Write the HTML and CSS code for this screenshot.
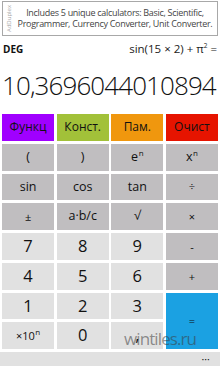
FILE: index.html
```html
<!DOCTYPE html>
<html>
<head>
<meta charset="utf-8">
<link rel="stylesheet" href="styles.css">
</head>
<body>
<div class="screen">
  <div class="ad">
    <span class="ad-brand">AdDuplex</span>
    <div class="ad-text">
      <span class="ad-line">Includes 5 unique calculators: Basic, Scientific,</span>
      <span class="ad-line">Programmer, Currency Converter, Unit Converter.</span>
    </div>
  </div>
  <div class="status">
    <span class="mode">DEG</span>
    <span class="expr">sin(15 × 2) + π<sup class="sq">2</sup> =</span>
  </div>
  <div class="result">10,3696044010894</div>
  <div class="pad">
    <button class="key top purple">Функц</button>
    <button class="key top green">Конст.</button>
    <button class="key top orange">Пам.</button>
    <button class="key top red">Очист</button>

    <button class="key dark">(</button>
    <button class="key dark">)</button>
    <button class="key dark"><span>e<sup class="pw">n</sup></span></button>
    <button class="key dark"><span>x<sup class="pw">n</sup></span></button>

    <button class="key dark">sin</button>
    <button class="key dark">cos</button>
    <button class="key dark">tan</button>
    <button class="key dark op">÷</button>

    <button class="key dark op">±</button>
    <button class="key dark">a·b/c</button>
    <button class="key dark">√</button>
    <button class="key dark op">×</button>

    <button class="key light num">7</button>
    <button class="key light num">8</button>
    <button class="key light num">9</button>
    <button class="key dark op">-</button>

    <button class="key light num">4</button>
    <button class="key light num">5</button>
    <button class="key light num">6</button>
    <button class="key dark op">+</button>

    <button class="key light num">1</button>
    <button class="key light num">2</button>
    <button class="key light num">3</button>
    <button class="key blue eq">=</button>

    <button class="key light exp"><span>×10<sup class="pw">n</sup></span></button>
    <button class="key light num">0</button>
    <button class="key light num">,</button>
  </div>
  <div class="appbar"><span class="dots">•••</span></div>
  <div class="watermark">wintiles.ru</div>
</div>
</body>
</html>
```

FILE: styles.css
```css
* { box-sizing: border-box; }
html, body { margin: 0; padding: 0; background: #fff; }
.screen {
  position: relative;
  width: 220px;
  height: 366px;
  overflow: hidden;
  font-family: "Open Sans", "Noto Sans", sans-serif;
  color: #111;
  display: flex;
  flex-direction: column;
}
.ad {
  position: relative;
  margin: 1px 2px 0 2px;
  height: 35px;
  border: 1px solid #a8a8a8;
  display: flex;
  align-items: center;
  justify-content: center;
}
.ad-brand {
  position: absolute;
  left: -9px;
  top: 13px;
  width: 30px;
  font-size: 6px;
  line-height: 7px;
  color: #aaa;
  transform: rotate(-90deg);
  text-align: center;
}
.ad-text {
  margin: 0 0 0 10px;
  display: flex;
  flex-direction: column;
  align-items: center;
  gap: 1px;
  font-size: 9px;
  color: #444;
  letter-spacing: -0.3px;
  white-space: nowrap;
}
.ad-line { display: block; line-height: 10px; height: 10px; }
.status {
  margin-top: 6px;
  height: 14px;
  padding: 0 3px;
  display: flex;
  justify-content: space-between;
  align-items: center;
  line-height: 14px;
}
.mode { font-size: 10px; font-weight: 700; color: #111; }
.expr { font-size: 11.5px; color: #222; }
.sq { font-size: 6.5px; vertical-align: 5px; line-height: 0; }
.result {
  margin-top: 11px;
  padding: 0 2px;
  height: 36px;
  line-height: 36px;
  font-size: 26px;
  font-weight: 300;
  color: #111;
  letter-spacing: -0.9px;
  white-space: nowrap;
}
.pad {
  margin-top: 11px;
  padding: 0 2px;
  height: 235px;
  display: grid;
  grid-template-columns: repeat(4, 1fr);
  grid-template-rows: repeat(8, 1fr);
  gap: 3px 2.5px;
}
.key {
  border: 0;
  margin: 0;
  padding: 0;
  font-family: inherit;
  color: #111;
  font-size: 12.5px;
  display: flex;
  align-items: center;
  justify-content: center;
  line-height: 1;
}
.top { font-size: 12px; color: #111; }
.purple { background: #a000ff; }
.green { background: #a2c139; }
.orange { background: #f0970e; }
.red { background: #e61400; }
.dark { background: #c0bec0; }
.light { background: #e1e1e1; }
.blue { background: #1ba1e2; grid-row: span 2; }
.num { font-size: 16.5px; }
.op { font-size: 11px; }
.eq { font-size: 11px; }
.exp { font-size: 11px; }
.pw { font-size: 8px; vertical-align: 5px; line-height: 0; margin-left: 0.5px; }
.appbar {
  margin-top: 3px;
  flex: 1;
  background: #e1e1e1;
  display: flex;
  justify-content: flex-end;
  padding: 3px 10px 0 0;
}
.dots { font-size: 6px; letter-spacing: 0.5px; color: #111; line-height: 10px; }
.watermark {
  position: absolute;
  left: 124px;
  top: 327px;
  font-size: 17px;
  color: rgba(60, 60, 60, 0.55);
  letter-spacing: -0.9px;
}
```
